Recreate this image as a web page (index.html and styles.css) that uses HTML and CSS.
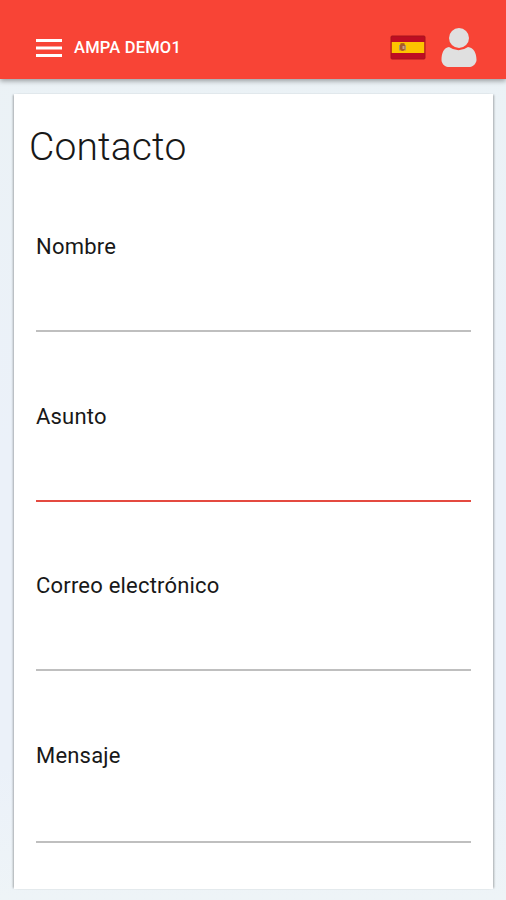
FILE: index.html
```html
<!DOCTYPE html>
<html lang="es">
<head>
<meta charset="utf-8">
<title>Contacto</title>
<link rel="stylesheet" href="styles.css">
</head>
<body>
<header class="bar">
  <svg class="menu" viewBox="0 0 26 18"><path d="M0 1.500h26M0 9h26M0 16.500h26" stroke="#fff" stroke-width="2.800"/></svg>
  <span class="brand">AMPA DEMO1</span>
  <svg class="flag" viewBox="0 0 36 25">
    <rect x="1" y="1" width="34" height="23" rx="1" fill="#bd0d23"/>
    <rect x="1.500" y="7" width="33" height="11" fill="#fdc400"/>
    <rect x="1" y="1" width="34" height="23" rx="1" fill="none" stroke="#a8141c"/>
    <path d="M10 9.500h5v4q0 2.500-2.500 2.500T10 13.500z" fill="#a7592f"/>
    <path d="M9.500 10v5.500M15.500 10v5.500" stroke="#a99562"/>
    <path d="M10.500 9h4" stroke="#9b4b24" stroke-width="1.500"/>
    <path d="M12.500 11h2v3h-2z" fill="#c9a08a"/>
  </svg>
  <svg class="user" viewBox="0 0 36 40">
    <path d="M8 19Q17.500 25.500 27 19C32.500 19.500 35.500 25 35.500 32C35.500 35 32 39 29 39H7C3.500 39 .5 35 .5 32C.5 25 3 19.500 8 19Z" fill="#e0e0e0"/>
    <circle cx="18" cy="10" r="10" fill="#e0e0e0"/>
  </svg>
</header>
<main class="card">
  <h1 class="title">Contacto</h1>
  <form class="form">
    <div class="field"><label class="label">Nombre</label></div>
    <div class="field active"><label class="label">Asunto</label></div>
    <div class="field"><label class="label">Correo electrónico</label></div>
    <div class="field message"><label class="label">Mensaje</label></div>
  </form>
</main>
</body>
</html>
```
FILE: styles.css
```css
* { box-sizing: border-box; }
body {
  margin: 0;
  height: 900px;
  overflow: hidden;
  background: linear-gradient(#ebf2f5, #ebf1f9 50%, #ebf1f9 85%, #eef4f7);
  font-family: Roboto, sans-serif;
  color: #181818;
}
.bar {
  display: flex;
  align-items: center;
  height: 79px;
  padding: 16px 29px 0 36px;
  background: #f84436;
  box-shadow: 0 2px 5px rgba(0, 0, 0, .36);
}
.menu { width: 26px; height: 18px; }
.brand {
  margin-left: 12px;
  font-size: 16.5px;
  font-weight: 500;
  line-height: 20px;
  letter-spacing: .2px;
  color: #fff;
  white-space: nowrap;
}
.flag { width: 36px; height: 25px; margin-left: auto; }
.user { width: 36px; height: 40px; margin-left: 15px; }
.card {
  height: 795px;
  margin: 15px 13px 0 14px;
  padding: 28px 22px 0;
  background: #fff;
  box-shadow: -2px 0 2px -1px rgba(0, 0, 0, .3), 2px 0 2px -1px rgba(0, 0, 0, .3);
}
.title {
  margin: 0 0 0 -7px;
  font-size: 39px;
  font-weight: 300;
  line-height: 50px;
  letter-spacing: .15px;
}
.form { padding-top: 61px; }
.field {
  height: 99px;
  margin-bottom: 70.5px;
  border-bottom: 2px solid #bfbfbf;
}
.active { height: 99.5px; margin-bottom: 70px; border-color: #e44a40; }
.message { height: 101px; }
.label {
  display: block;
  font-size: 22px;
  line-height: 28px;
  letter-spacing: .2px;
}
```
